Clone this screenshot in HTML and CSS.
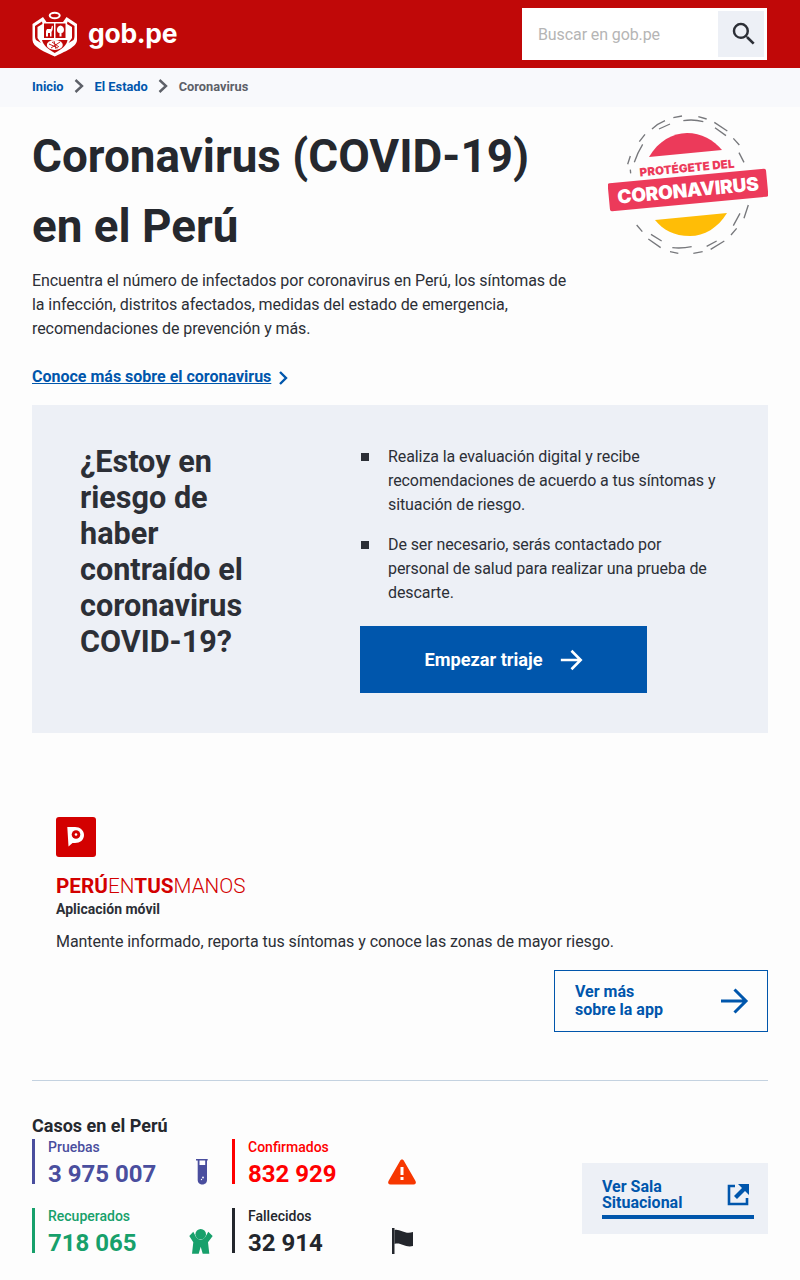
FILE: index.html
```html
<!DOCTYPE html>
<html lang="es">
<head>
<meta charset="utf-8">
<title>Coronavirus (COVID-19) en el Perú</title>
<link rel="stylesheet" href="styles.css">
</head>
<body>
<header class="topbar">
  <a class="brand">
    <svg class="crest" width="46" height="46" viewBox="0 0 46 46">
      <ellipse cx="22.700" cy="4.500" rx="5" ry="2.800" fill="none" stroke="#fff" stroke-width="2"/>
      <path d="M0.500 13 L11 6 L14.500 11 H31 L34.500 6 L45 13 V29 C45 36 32 41 22.700 45.500 C13 41 0.500 36 0.500 29 Z" fill="#fff"/>
      <path d="M3 15 L10 10.500 L10.500 13 L5.500 16 V27 L9 32 L4 29 C3 27 3 26 3 24 Z" fill="#c00808"/>
      <path d="M42.500 15 L35.500 10.500 L35 13 L40 16 V27 L36.500 32 L41.500 29 C42.500 27 42.500 26 42.500 24 Z" fill="#c00808"/>
      <path d="M12 12.500 H22 V27 H12 Z M23.500 12.500 H33.500 V27 H23.500 Z" fill="#c00808"/>
      <path d="M10 29 H35.500 C35 34 30 38 22.700 42 C16 38 11 34 10 29 Z" fill="#c00808"/>
      <path d="M14 25.500 V20 L15 18 H19 L20 14.500 L21 15.500 L20.500 19 L19.500 21 V25.500 H18 V22 H16 V25.500 Z" fill="#fff"/>
      <path d="M27.500 25.500 V22 C24 22 24 15 28.500 14.500 C33 15 33 22 29.500 22 V25.500 Z" fill="#fff"/>
      <ellipse cx="22.800" cy="34" rx="8" ry="5" fill="#fff"/>
      <path d="M17 33 L26 37 M19 37 L28 31 M22 30 L24 38 M27 36 L20 31" stroke="#c00808" stroke-width="0.900"/>
    </svg>
    <span class="brand-name">gob.pe</span>
  </a>
  <div class="search">
    <span class="search-text">Buscar en gob.pe</span>
    <span class="search-btn">
      <svg class="search-icon" width="30" height="30" viewBox="0 0 24 24"><path fill="#2c2f36" d="M15.500 14h-.79l-.28-.27A6.470 6.470 0 0 0 16 9.500 6.500 6.500 0 1 0 9.500 16c1.610 0 3.090-.59 4.230-1.570l.27.28v.79l5 4.990L20.490 19l-4.990-5zm-6 0C7.010 14 5 11.990 5 9.500S7.010 5 9.500 5 14 7.010 14 9.500 11.990 14 9.500 14z"/></svg>
    </span>
  </div>
</header>

<nav class="crumbs">
  <a class="crumb-link">Inicio</a>
  <svg class="crumb-sep" width="12" height="16" viewBox="0 0 12 16"><path d="M2.500 2 L9 8 L2.500 14" fill="none" stroke="#5d6068" stroke-width="2.400"/></svg>
  <a class="crumb-link">El Estado</a>
  <svg class="crumb-sep" width="12" height="16" viewBox="0 0 12 16"><path d="M2.500 2 L9 8 L2.500 14" fill="none" stroke="#5d6068" stroke-width="2.400"/></svg>
  <span class="crumb-current">Coronavirus</span>
</nav>

<main class="page">
  <section class="intro">
    <div class="intro-text">
      <h1 class="title">Coronavirus (COVID-19) en el Perú</h1>
      <p class="lead">Encuentra el número de infectados por coronavirus en Perú, los síntomas de la infección, distritos afectados, medidas del estado de emergencia, recomendaciones de prevención y más.</p>
      <a class="more-link"><span class="more-label">Conoce más sobre el coronavirus</span>
        <svg width="12" height="16" viewBox="0 0 12 16"><path d="M3 2 L9 8 L3 14" fill="none" stroke="#0056ac" stroke-width="2.400"/></svg>
      </a>
    </div>
    <svg class="badge" width="160" height="142" viewBox="0 0 160 142">
      <g transform="translate(-18 -9) scale(0.3333)" fill="none" stroke="#77787c" stroke-width="4">
        <path d="M122 205 L121 194 M113 178 L121 153 M133 172 Q143 142 158 118 M148 110 L165 88 M186 72 Q203 56 225 47 M207 72 L240 57 M250 38 L276 33 M280 47 Q310 42 340 50 M325 35 L350 42 M373 52 L412 78 M375 68 L408 92 M430 100 L448 120 M447 143 L462 172"/>
        <path d="M475 300 L462 340 M450 325 L430 362 M440 370 L423 390 M403 408 L362 433 M380 408 L350 424 M338 440 L310 445 M305 425 Q276 431 247 428 M265 445 L240 440 M212 428 L175 402 M215 408 L183 388 M157 380 L140 360"/>
      </g>
      <path d="M41 43 C50 27 65 19 79 19 C93 19 106 26 114 36 Z" fill="#ec3a5a"/>
      <path d="M47 106 L119 99 C110 114 96 122 82 122 C66 122 55 116 47 106 Z" fill="#ffbd06"/>
      <rect x="0.500" y="62" width="159" height="28" rx="2" fill="#ec3a5a" transform="rotate(-5.400 80 76)"/>
      <text class="badge-small" x="79" y="58" text-anchor="middle" textLength="95" transform="rotate(-5.400 79 54)">PROTÉGETE DEL</text>
      <text class="badge-big" x="80" y="83" text-anchor="middle" textLength="142" transform="rotate(-5.400 80 76)">CORONAVIRUS</text>
    </svg>
  </section>

  <section class="triage">
    <h2 class="triage-title">¿Estoy en riesgo de haber contraído el coronavirus COVID-19?</h2>
    <div class="triage-body">
      <ul class="triage-list">
        <li class="triage-item">Realiza la evaluación digital y recibe recomendaciones de acuerdo a tus síntomas y situación de riesgo.</li>
        <li class="triage-item">De ser necesario, serás contactado por personal de salud para realizar una prueba de descarte.</li>
      </ul>
      <a class="triage-btn">Empezar triaje
        <svg width="24" height="24" viewBox="0 0 26 26"><path d="M2 13 H23 M13.500 3 L23.500 13 L13.500 23" fill="none" stroke="#fff" stroke-width="2.800"/></svg>
      </a>
    </div>
  </section>

  <section class="app">
    <div class="app-icon">
      <svg width="24" height="24" viewBox="0 0 24 24">
        <path d="M3.300 2 H11 C16 2 20 5.500 20 10 C20 15 16 18 11 18 H8.500 L4.500 21.500 Z" fill="#fff"/>
        <circle cx="12" cy="9.500" r="4.300" fill="#d30000"/>
        <circle cx="12" cy="9.500" r="1.300" fill="#fff"/>
      </svg>
    </div>
    <div class="app-logo"><b>PERÚ</b>EN<b>TUS</b>MANOS</div>
    <div class="app-kind">Aplicación móvil</div>
    <p class="app-desc">Mantente informado, reporta tus síntomas y conoce las zonas de mayor riesgo.</p>
    <div class="app-action">
      <a class="app-btn"><span>Ver más<br>sobre la app</span>
        <svg width="30" height="30" viewBox="0 0 30 30"><path d="M2 15 H27 M15.500 3.500 L27 15 L15.500 26.500" fill="none" stroke="#0056ac" stroke-width="3"/></svg>
      </a>
    </div>
  </section>

  <hr class="rule">

  <section class="cases">
    <div class="cases-main">
      <h3 class="cases-title">Casos en el Perú</h3>
      <div class="stats">
        <div class="stat stat-blue">
          <div class="stat-text"><div class="stat-label">Pruebas</div><div class="stat-value">3 975 007</div></div>
          <svg class="stat-icon" width="30" height="26" viewBox="0 0 30 26"><path d="M9 0 H20.700 V1.500 H20 V21 C20 27 10.700 27 10.700 21 V1.500 H9 Z" fill="#4a4e9e"/><path d="M12.500 1.500 H18.200 V6 H12.500 Z" fill="#fff"/><circle cx="16" cy="18.500" r="0.900" fill="#fff"/><circle cx="14.500" cy="20.500" r="0.700" fill="#fff"/></svg>
        </div>
        <div class="stat stat-red">
          <div class="stat-text"><div class="stat-label">Confirmados</div><div class="stat-value">832 929</div></div>
          <svg class="stat-icon" width="30" height="26" viewBox="0 0 30 26"><path d="M15 0.500 C16 0.500 16.500 1 17 2 L28.500 22 C29.500 24 28.500 25.500 26.500 25.500 H3.500 C1.500 25.500 0.500 24 1.500 22 L13 2 C13.500 1 14 0.500 15 0.500 Z" fill="#f73700"/><rect x="13.500" y="8" width="3" height="8" fill="#fff"/><rect x="13.500" y="18" width="3" height="3" fill="#fff"/></svg>
        </div>
        <div class="stat stat-green">
          <div class="stat-text"><div class="stat-label">Recuperados</div><div class="stat-value">718 065</div></div>
          <svg class="stat-icon" width="30" height="26" viewBox="1 0 30 26"><circle cx="14.700" cy="6.300" r="5.300" fill="#17a06b"/><path d="M3.300 8 L7.300 3.700 L10 9 Q14.700 15 19.300 9 L22.300 3.700 L26.700 8 L22 14.300 L23.300 25.700 H16.700 L14.700 18.700 L12.700 25.700 H6 L7.300 14.300 Z" fill="#17a06b"/></svg>
        </div>
        <div class="stat stat-dark">
          <div class="stat-text"><div class="stat-label">Fallecidos</div><div class="stat-value">32 914</div></div>
          <svg class="stat-icon" width="30" height="26" viewBox="0 0 30 26"><path d="M5 0 H7.500 V26 H5 Z" fill="#23262c"/><path d="M7.500 2 C13 0.500 18 7 26 4 V18 C18 20 14 14 7.500 16 Z" fill="#23262c"/></svg>
        </div>
      </div>
    </div>
    <a class="room">
      <span class="room-inner">
        <span class="room-label">Ver Sala<br>Situacional</span>
        <svg width="24" height="24" viewBox="0 0 24 24"><path d="M9 3 H3 V21 H21 V15" fill="none" stroke="#0056ac" stroke-width="2.600"/><path d="M12 1 H23 V12 L19 8 L11 16 L8 13 L16 5 Z" fill="#0056ac"/></svg>
      </span>
    </a>
  </section>
</main>
</body>
</html>
```
FILE: styles.css
```css
* { box-sizing: border-box; }
html, body { margin: 0; padding: 0; }
body {
  width: 800px;
  height: 1280px;
  overflow: hidden;
  background: #fdfdfd;
  font-family: Roboto, "Liberation Sans", sans-serif;
  color: #2c2f36;
}
.topbar {
  height: 68px;
  background: #c00808;
  display: flex;
  align-items: center;
  justify-content: space-between;
  padding: 0 33px 0 32px;
}
.brand { display: flex; align-items: center; gap: 10px; color: #fff; }
.crest { display: block; margin-top: 0; }
.brand-name {
  font-family: Inter, "Open Sans", sans-serif;
  font-weight: 700;
  font-size: 26.500px;
  letter-spacing: -0.300px;
  line-height: 32px;
  margin-top: -3px;
}
.search {
  width: 245px;
  height: 52px;
  background: #fff;
  display: flex;
  align-items: center;
  justify-content: space-between;
  padding: 3px 3px 3px 16px;
}
.search-text { font-size: 16px; letter-spacing: -0.100px; color: #b5b5b5; }
.search-btn {
  width: 46px;
  height: 46px;
  background: #edf0f6;
  display: flex;
  align-items: center;
  justify-content: center;
}
.search-icon { margin-left: 5px; }
.crumbs {
  height: 39px;
  background: #f8f9fc;
  display: flex;
  align-items: center;
  padding: 0 0 3px 32px;
  font-size: 12.800px;
  font-weight: 700;
}
.crumb-link { color: #0056ac; }
.crumb-current { color: #5d6068; }
.crumb-sep { margin: 0 9.500px; }
.page { padding: 0 32px; }
.intro { position: relative; height: 298px; }
.intro-text { width: 545px; padding-top: 15px; }
.title {
  margin: 0;
  font-size: 45.800px;
  line-height: 70px;
  font-weight: 700;
  color: #25282e;
}
.lead {
  margin: 7px 0 0;
  font-size: 16px;
  letter-spacing: -0.080px;
  line-height: 24px;
  color: #2c2f36;
}
.more-link {
  display: flex;
  align-items: center;
  gap: 6px;
  margin-top: 24px;
  color: #0056ac;
  font-size: 16px;
  font-weight: 700;
  line-height: 24px;
}
.more-label { text-decoration: underline; }
.more-link svg { margin-top: 2px; }
.badge { position: absolute; right: 0; top: 7px; }
.badge-small { font: 900 11.500px Inter, Roboto, sans-serif; fill: #ec3a5a; }
.badge-big { font: 900 19px Inter, Roboto, sans-serif; fill: #fff; }
.triage {
  height: 328px;
  background: #edf0f6;
  display: flex;
  padding: 39px 48px 0;
}
.triage-title {
  width: 180px;
  margin: 0;
  font-size: 30.600px;
  line-height: 36px;
  font-weight: 700;
  color: #2c2f36;
}
.triage-body { margin-left: 100px; width: 360px; padding-top: 1px; }
.triage-list { list-style: none; margin: 0; padding: 0; }
.triage-item {
  position: relative;
  padding-left: 28px;
  font-size: 16px;
  letter-spacing: -0.090px;
  line-height: 24px;
  margin-bottom: 16px;
}
.triage-item::before {
  content: "";
  position: absolute;
  left: 1px;
  top: 8px;
  width: 8px;
  height: 8px;
  background: #2c2f36;
}
.triage-btn {
  width: 287px;
  height: 67px;
  margin-top: 21px;
  background: #0056ac;
  color: #fff;
  display: flex;
  align-items: center;
  justify-content: center;
  gap: 16px;
  font-size: 18.200px;
  font-weight: 700;
}
.app { padding: 84px 0 0 24px; }
.app-icon {
  width: 40px;
  height: 40px;
  background: #d30000;
  border-radius: 3px;
  display: flex;
  align-items: center;
  justify-content: center;
}
.app-logo {
  margin-top: 17px;
  font-weight: 300;
  font-size: 20.700px;
  line-height: 24px;
  color: #d30000;
}
.app-logo b { font-weight: 700; }
.app-kind { font-size: 14px; font-weight: 700; line-height: 20px; margin-top: 1px; }
.app-desc { margin: 11px 0 0; font-size: 16px; letter-spacing: -0.060px; line-height: 24px; }
.app-action { display: flex; justify-content: flex-end; margin-top: 16px; }
.app-btn {
  width: 214px;
  height: 62px;
  border: 1px solid #0056ac;
  display: flex;
  align-items: center;
  justify-content: space-between;
  padding: 0 18px 0 20px;
  color: #0056ac;
  font-size: 16px;
  font-weight: 700;
  line-height: 18px;
}
.rule { border: 0; border-top: 1px solid #c4d2e0; margin: 48px 0 0; }
.cases { display: flex; justify-content: space-between; padding-top: 32px; }
.cases-main { width: 400px; }
.cases-title { margin: 0; font-size: 18px; font-weight: 700; line-height: 26px; color: #25282e; }
.stats { display: grid; grid-template-columns: 200px 200px; row-gap: 24px; }
.stat {
  height: 45px;
  border-left: 3px solid;
  padding-left: 13px;
  display: flex;
  justify-content: space-between;
  align-items: flex-start;
  width: 185px;
}
.stat-label { font-size: 14px; font-weight: 500; line-height: 16px; }
.stat-value { font-size: 24px; font-weight: 700; line-height: 30px; margin-top: 4px; }
.stat-icon { margin-top: 20px; }
.stat-blue { border-color: #4a4e9e; color: #4a4e9e; }
.stat-red { border-color: #ff0000; color: #ff0000; }
.stat-green { border-color: #17a06b; color: #17a06b; }
.stat-dark { border-color: #23262c; color: #23262c; }
.room {
  width: 186px;
  height: 71px;
  margin-top: 50px;
  background: #edf0f6;
  padding: 16px 14px 0 20px;
  color: #0056ac;
  display: block;
}
.room-inner {
  display: flex;
  align-items: center;
  justify-content: space-between;
  border-bottom: 4px solid #0056ac;
  padding: 0 4px 4px 0;
  height: 40px;
}
.room-label { font-size: 16px; font-weight: 700; line-height: 16px; }
```
